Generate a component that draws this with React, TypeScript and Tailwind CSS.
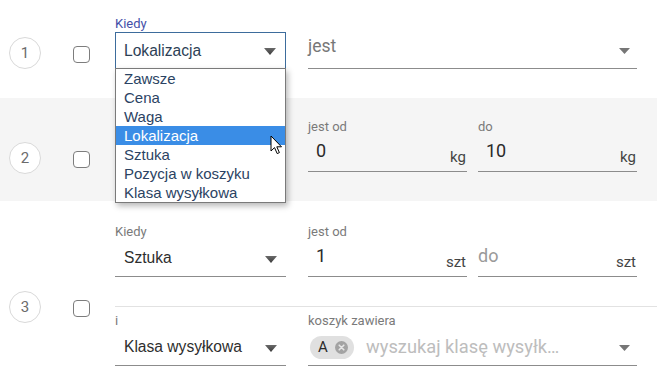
import React from "react";

const roboto = { fontFamily: "Roboto, 'Liberation Sans', sans-serif" };
const arial = { fontFamily: "'Liberation Sans', Arial, sans-serif" };

function Circle({ n }: { n: number }) {
  return (
    <div
      className="w-[32px] h-[32px] rounded-full border border-[#d9d9d9] flex items-center justify-center text-[15px] text-[#6b6b6b] bg-white"
      style={roboto}
    >
      {n}
    </div>
  );
}

function Check() {
  return <div className="w-[17px] h-[17px] rounded-[4px] border border-[#7d7d7d] bg-white ml-[32px]" />;
}

function DarkArrow() {
  return (
    <svg width="12" height="7" viewBox="0 0 12 7" className="mr-[9px] mt-[2px]">
      <defs>
        <linearGradient id="ga" x1="0" y1="0" x2="0" y2="1">
          <stop offset="0" stopColor="#6a6a6a" />
          <stop offset="1" stopColor="#3a3a3a" />
        </linearGradient>
      </defs>
      <polygon points="0,0 12,0 6,7" fill="url(#ga)" />
    </svg>
  );
}

function LightArrow() {
  return (
    <svg width="11" height="6" viewBox="0 0 11 6" className="mr-[7px] mt-[2px]">
      <polygon points="0,0 11,0 5.5,6" fill="#767676" />
    </svg>
  );
}

function Label({ children, blue }: { children: React.ReactNode; blue?: boolean }) {
  return (
    <div
      className={blue ? "h-[16px] text-[13px] leading-[16px] text-[#4550a8]" : "h-[16px] text-[13px] leading-[16px] text-[#7a7a7a]"}
      style={roboto}
    >
      {children}
    </div>
  );
}

function NativeSelect({ value }: { value: string }) {
  return (
    <div className="h-[37px] border-b border-[#8c8c8c] flex items-center justify-between">
      <span className="pl-[9px] text-[15.6px] text-[#2e2e2e]" style={arial}>
        {value}
      </span>
      <DarkArrow />
    </div>
  );
}

function NumField({ value, unit, placeholder }: { value?: string; unit: string; placeholder?: string }) {
  return (
    <div className="h-[37px] border-b border-[#8c8c8c] flex items-center justify-between" style={roboto}>
      {value ? (
        <span className="pl-[8px] text-[18px] leading-[20px] text-[#2a2a2a] mb-[4px]">{value}</span>
      ) : (
        <span className="text-[18px] leading-[20px] text-[#9a9a9a] mb-[4px]">{placeholder}</span>
      )}
      <span className="text-[15px] leading-[18px] text-[#444] mt-[8px] pr-[1px]">{unit}</span>
    </div>
  );
}

const items = ["Zawsze", "Cena", "Waga", "Lokalizacja", "Sztuka", "Pozycja w koszyku", "Klasa wysyłkowa"];

function Cursor() {
  return (
    <svg width="13" height="20" viewBox="0 0 13 20" className="absolute left-[154px] top-[66px]">
      <path
        d="M1 1 L1 16 L4.5 12.6 L7.2 18.6 L9.4 17.6 L6.8 11.8 L11.5 11.8 Z"
        fill="#ffffff"
        stroke="#000000"
        strokeWidth="1"
        strokeLinejoin="round"
      />
    </svg>
  );
}

export default function App() {
  return (
    <div className="w-[657px] h-[386px] overflow-hidden bg-white relative">
      {/* Row 1 */}
      <div className="flex h-[98px] relative z-10">
        <div className="w-[115px] flex items-center self-start mt-[37px] pl-[9px]">
          <Circle n={1} />
          <div className="mt-[3px]">
            <Check />
          </div>
        </div>
        <div className="flex pt-[16px]">
          <div className="w-[171px] relative">
            <Label blue>Kiedy</Label>
            <div className="h-[37px] border border-[#3d6c9c] flex items-center justify-between bg-white">
              <span className="pl-[8px] text-[15.6px] text-[#2d3f56]" style={arial}>
                Lokalizacja
              </span>
              <DarkArrow />
            </div>
            <div className="absolute left-0 top-[52px] w-[171px] border border-[#7a7a7a] bg-white shadow-[2px_3px_6px_rgba(0,0,0,0.28)]">
              {items.map((it) => (
                <div
                  key={it}
                  className={
                    it === "Lokalizacja"
                      ? "h-[19px] leading-[19px] pl-[8px] text-[15px] bg-[#3a8de6] text-white"
                      : "h-[19px] leading-[19px] pl-[8px] text-[15px] text-[#2b4363]"
                  }
                  style={arial}
                >
                  {it}
                </div>
              ))}
              <Cursor />
            </div>
          </div>
          <div className="w-[329px] ml-[22px]">
            <div className="h-[16px]" />
            <div className="h-[37px] border-b border-[#8c8c8c] flex items-center justify-between" style={roboto}>
              <span className="text-[17.5px] leading-[20px] text-[#777] mb-[9px]">jest</span>
              <LightArrow />
            </div>
          </div>
        </div>
      </div>

      {/* Row 2 */}
      <div className="flex h-[103px] bg-[#f5f5f5]">
        <div className="w-[115px] flex items-center self-start mt-[44px] pl-[9px]">
          <Circle n={2} />
          <div className="mt-[3px]">
            <Check />
          </div>
        </div>
        <div className="flex pt-[21px]">
          <div className="w-[171px]" />
          <div className="w-[329px] ml-[22px] flex gap-[11px]">
            <div className="w-[159px]">
              <Label>jest od</Label>
              <NumField value="0" unit="kg" />
            </div>
            <div className="w-[159px]">
              <Label>do</Label>
              <NumField value="10" unit="kg" />
            </div>
          </div>
        </div>
      </div>

      {/* Row 3 */}
      <div className="flex h-[212px]">
        <div className="w-[115px] flex items-center self-start mt-[90px] pl-[9px]">
          <Circle n={3} />
          <div className="mt-[3px]">
            <Check />
          </div>
        </div>
        <div className="flex-1 flex flex-col pt-[23px]">
          <div className="flex">
            <div className="w-[171px]">
              <Label>Kiedy</Label>
              <NativeSelect value="Sztuka" />
            </div>
            <div className="w-[329px] ml-[22px] flex gap-[11px]">
              <div className="w-[159px]">
                <Label>jest od</Label>
                <NumField value="1" unit="szt" />
              </div>
              <div className="w-[159px]">
                <div className="h-[16px]" />
                <NumField placeholder="do" unit="szt" />
              </div>
            </div>
          </div>
          <div className="h-px bg-[#e2e2e2] mt-[29px]" />
          <div className="flex mt-[6px]">
            <div className="w-[171px]">
              <Label>i</Label>
              <NativeSelect value="Klasa wysyłkowa" />
            </div>
            <div className="w-[329px] ml-[22px]">
              <Label>koszyk zawiera</Label>
              <div className="h-[37px] border-b border-[#8c8c8c] flex items-center justify-between" style={roboto}>
                <div className="flex items-center">
                  <div className="ml-[2px] h-[23px] w-[44px] rounded-full bg-[#e0e0e0] flex items-center justify-between">
                    <span className="pl-[8px] text-[15px] text-[#2a2a2a]">A</span>
                    <svg width="13" height="13" viewBox="0 0 13 13" className="mr-[6px]">
                      <circle cx="6.5" cy="6.5" r="6.5" fill="#a3a3a3" />
                      <path d="M4.2 4.2 L8.8 8.8 M8.8 4.2 L4.2 8.8" stroke="#e6e6e6" strokeWidth="1.6" strokeLinecap="round" />
                    </svg>
                  </div>
                  <span className="ml-[12px] text-[18.3px] text-[#bdbdbd]">wyszukaj klasę wysyłk…</span>
                </div>
                <LightArrow />
              </div>
            </div>
          </div>
        </div>
      </div>
    </div>
  );
}
